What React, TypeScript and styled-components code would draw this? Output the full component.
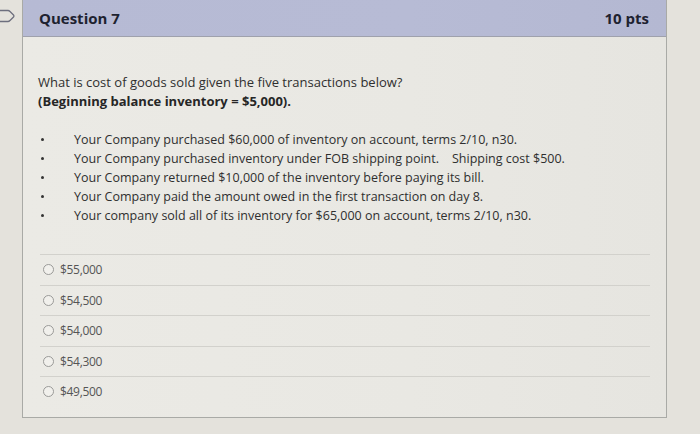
import styled, { createGlobalStyle } from "styled-components";

const GlobalStyle = createGlobalStyle`
  html, body {
    margin: 0;
    padding: 0;
    background: #e4e2dc;
    font-family: "Open Sans", "Liberation Sans", sans-serif;
  }
`;

const transactions = [
  "Your Company purchased $60,000 of inventory on account, terms 2/10, n30.",
  "Your Company purchased inventory under FOB shipping point.\u00a0\u00a0\u00a0 Shipping cost $500.",
  "Your Company returned $10,000 of the inventory before paying its bill.",
  "Your Company paid the amount owed in the first transaction on day 8.",
  "Your company sold all of its inventory for $65,000 on account, terms 2/10, n30.",
];

const answers = ["$55,000", "$54,500", "$54,000", "$54,300", "$49,500"];

function Arrow() {
  return (
    <ArrowIcon width="16" height="14" viewBox="0 0 16 14">
      <path
        d="M-4 1.5 H8 Q9 1.5 10 2.5 L13.5 6 Q14.3 7 13.5 8 L10 11.5 Q9 12.5 8 12.5 H-4"
        fill="none"
        stroke="#6d6f7e"
        strokeWidth="1.3"
      />
    </ArrowIcon>
  );
}

export default function App() {
  return (
    <>
      <GlobalStyle />
      <Page>
        <Arrow />
        <Panel>
          <Header>
            <Title>Question 7</Title>
            <Points>10 pts</Points>
          </Header>
          <Body>
            <Prompt>
              What is cost of goods sold given the five transactions below?
              <br />
              <strong>(Beginning balance inventory = $5,000).</strong>
            </Prompt>
            <List>
              {transactions.map((t) => (
                <Item key={t}>
                  <Bullet />
                  <span>{t}</span>
                </Item>
              ))}
            </List>
            <Answers>
              {answers.map((a) => (
                <Answer key={a}>
                  <Radio />
                  <span>{a}</span>
                </Answer>
              ))}
            </Answers>
          </Body>
        </Panel>
      </Page>
    </>
  );
}

const Page = styled.div`
  width: 700px;
  height: 434px;
  position: relative;
  padding: 0 33px 16px 22px;
  box-sizing: border-box;
  overflow: hidden;
`;

const ArrowIcon = styled.svg`
  position: absolute;
  left: 0;
  top: 9px;
`;

const Panel = styled.div`
  height: 100%;
  border: 1px solid #a9aaa6;
  border-top: none;
  background: linear-gradient(to right, #ebeae5, #e9e8e3 60%, #e6e5e0);
  box-sizing: border-box;
`;

const Header = styled.div`
  height: 37px;
  background: linear-gradient(to right, #b6bad4, #b7bbd5 60%, #b4b8d2);
  border-bottom: 1px solid #9fa1ac;
  display: flex;
  align-items: center;
  justify-content: space-between;
  padding: 0 17px 0 16px;
  box-sizing: border-box;
`;

const Title = styled.div`
  font-size: 15px;
  font-weight: 700;
  color: #1e2230;
`;

const Points = styled(Title)``;

const Body = styled.div`
  padding: 36px 16px 0 15px;
`;

const Prompt = styled.p`
  margin: 0;
  font-size: 13px;
  line-height: 19px;
  color: #2f2f2f;
  strong {
    font-weight: 700;
    color: #262626;
  }
`;

const List = styled.ul`
  list-style: none;
  margin: 19px 0 0;
  padding: 0;
`;

const Item = styled.li`
  display: flex;
  align-items: center;
  height: 19px;
  font-size: 12.5px;
  color: #2f2f2f;
`;

const Bullet = styled.i`
  width: 3px;
  height: 3px;
  border-radius: 50%;
  background: #333;
  margin: 0 30px 0 3px;
`;

const Answers = styled.div`
  margin: 29px 0 0 2px;
  width: 610px;
`;

const Answer = styled.div`
  height: 29.5px;
  border-top: 1px solid #d2d1cc;
  display: flex;
  align-items: center;
  padding-left: 3px;
  font-size: 12px;
  color: #555;
  letter-spacing: -0.3px;
`;

const Radio = styled.span`
  width: 9px;
  height: 9px;
  border: 1px solid #9a9a98;
  border-radius: 50%;
  background: #f1f0ec;
  margin-right: 6px;
`;
